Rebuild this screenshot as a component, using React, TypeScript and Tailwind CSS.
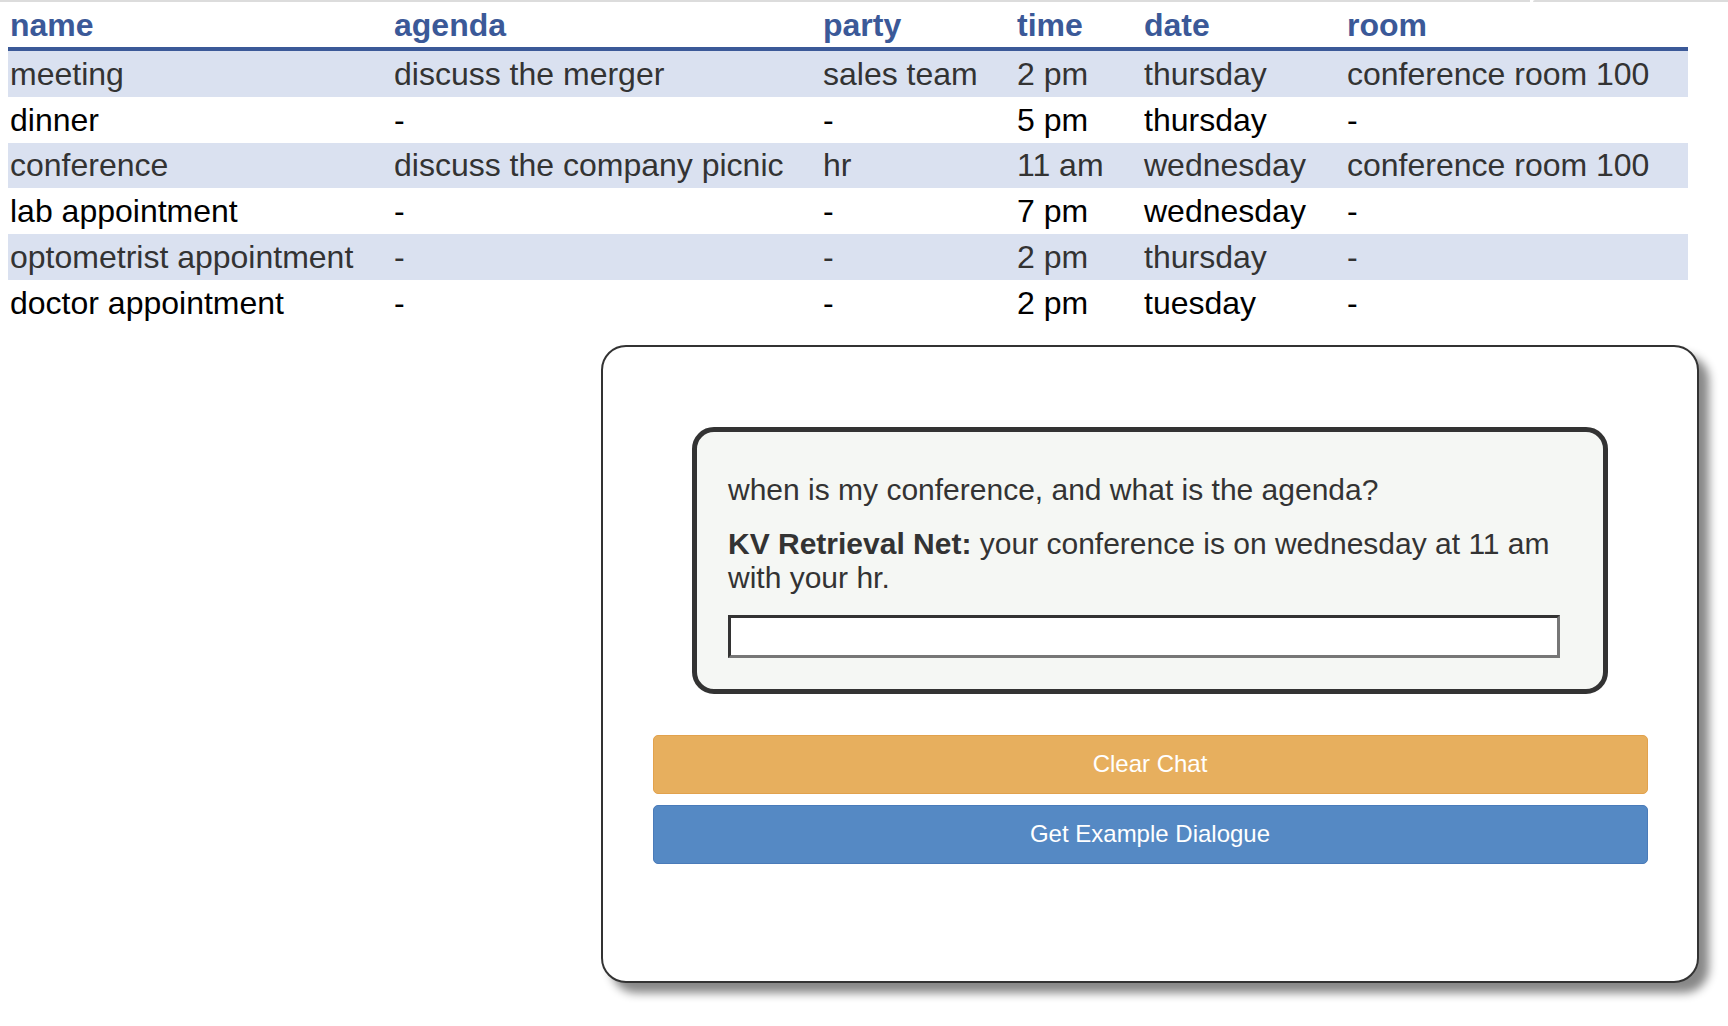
import React from "react";

const rows = [
  ["meeting", "discuss the merger", "sales team", "2 pm", "thursday", "conference room 100"],
  ["dinner", "-", "-", "5 pm", "thursday", "-"],
  ["conference", "discuss the company picnic", "hr", "11 am", "wednesday", "conference room 100"],
  ["lab appointment", "-", "-", "7 pm", "wednesday", "-"],
  ["optometrist appointment", "-", "-", "2 pm", "thursday", "-"],
  ["doctor appointment", "-", "-", "2 pm", "tuesday", "-"],
];

const headers = ["name", "agenda", "party", "time", "date", "room"];

export default function App() {
  return (
    <div className="w-[1728px] h-[1026px] bg-white overflow-hidden font-['Liberation_Sans',Arial,Helvetica,sans-serif]">
      <div className="flex h-[2px]">
        <div className="w-[1530px] bg-[#dcdcdc]" />
        <div className="ml-[3px] flex-1 bg-[#dcdcdc] rounded-tl-[2px]" />
      </div>

      <div className="ml-[8px] w-[1680px]">
        <div className="grid grid-cols-[384px_429px_194px_127px_203px_343px] h-[49px] items-center border-b-4 border-[#3b5998] text-[32px] leading-[36px] font-bold text-[#3b5998]">
          {headers.map((h) => (
            <div key={h} className="pl-[2px] whitespace-nowrap">
              {h}
            </div>
          ))}
        </div>
        {rows.map((r, i) => (
          <div
            key={i}
            className={
              i % 2 === 0
                ? "grid grid-cols-[384px_429px_194px_127px_203px_343px] h-[45.8px] items-center bg-[#dae1f0] text-[#333] text-[32px] leading-[36px]"
                : "grid grid-cols-[384px_429px_194px_127px_203px_343px] h-[45.8px] items-center bg-white text-black text-[32px] leading-[36px]"
            }
          >
            {r.map((c, j) => (
              <div key={j} className="pl-[2px] whitespace-nowrap">
                {c}
              </div>
            ))}
          </div>
        ))}
      </div>

      <div className="ml-[601px] mt-[19px] w-[1098px] h-[638px] border-2 border-[#333] rounded-[25px] bg-white shadow-[10px_10px_10px_#888] pt-[80px]">
        <div className="mx-auto w-[916px] border-[5px] border-[#333] rounded-[22px] bg-[#f5f7f4] px-[31px] pt-[41px] pb-[31px] text-[30px] leading-[34px] text-[#333]">
          <p>when is my conference, and what is the agenda?</p>
          <p className="mt-[20px]">
            <span className="font-bold">KV Retrieval Net:</span> your conference is on wednesday at 11 am with your hr.
          </p>
          <div className="mt-[20px] w-[832px] h-[43px] bg-white border-[3px] border-t-[#333] border-l-[#333] border-b-[#777] border-r-[#777]" />
        </div>

        <div className="mt-[41px] mx-auto w-[995px] h-[59px] rounded-[5px] bg-[#e7af5e] border border-[#e2a24d] flex items-center justify-center text-white text-[24px]">
          Clear Chat
        </div>
        <div className="mt-[11px] mx-auto w-[995px] h-[59px] rounded-[5px] bg-[#5589c4] border border-[#4a7bb9] flex items-center justify-center text-white text-[24px]">
          Get Example Dialogue
        </div>
      </div>
    </div>
  );
}
